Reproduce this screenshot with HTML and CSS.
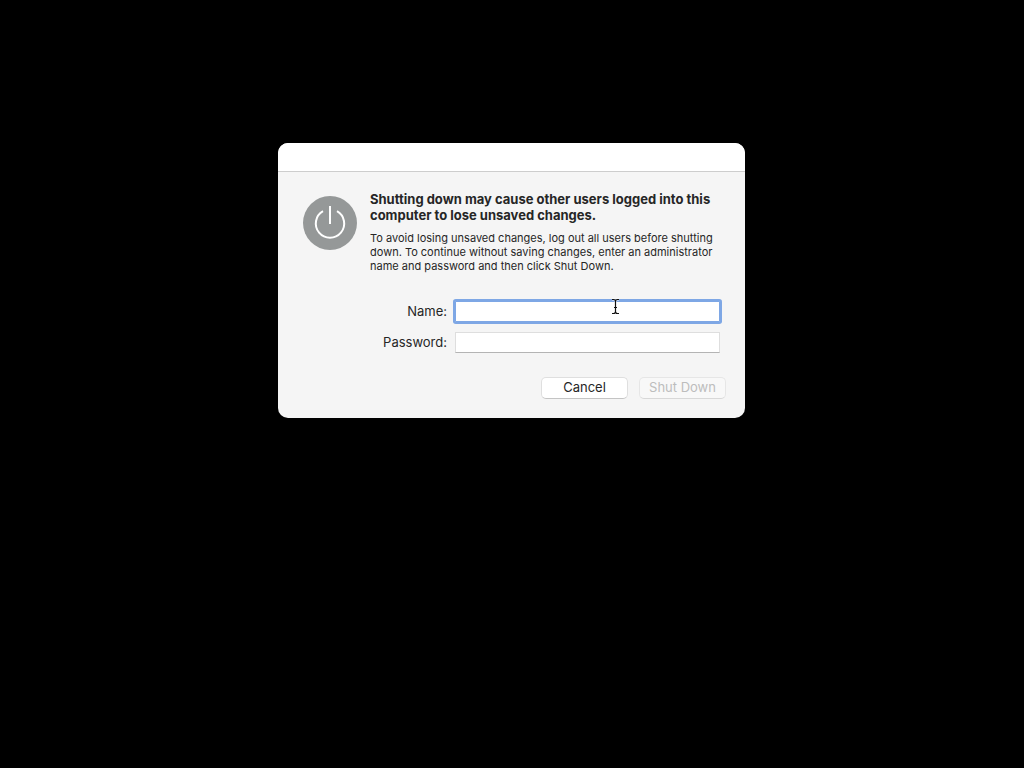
FILE: index.html
```html
<!DOCTYPE html>
<html lang="en">
<head>
<meta charset="utf-8">
<title>Shut Down</title>
<link rel="stylesheet" href="styles.css">
</head>
<body>
<main class="dialog" role="dialog" aria-labelledby="dialog-title" aria-describedby="dialog-text">
  <header class="titlebar"></header>
  <form class="content">
    <div class="message">
      <svg class="power-icon" viewBox="0 0 54 54" aria-hidden="true">
        <circle cx="27" cy="27" r="27" fill="#959898"/>
        <path d="M20 15.2A14.2 14.2 0 1 0 34 15.2M27 10V28" fill="none" stroke="#fff" stroke-width="2"/>
      </svg>
      <div class="copy">
        <h1 class="heading" id="dialog-title">Shutting down may cause other users logged into this computer to lose unsaved changes.</h1>
        <p class="text" id="dialog-text">To avoid losing unsaved changes, log out all users before shutting down. To continue without saving changes, enter an administrator name and password and then click Shut Down.</p>
      </div>
    </div>
    <div class="fields">
      <label class="label" for="name">Name:</label>
      <div class="field">
        <input class="input input-active" id="name" type="text" autocomplete="off">
        <svg class="cursor" viewBox="0 0 9 17" aria-hidden="true">
          <path d="M1 1.5H2.5Q4.5 1.5 4.5 3.5Q4.5 1.5 6.5 1.5H8M4.5 3V14M3 9.5H6M1 15.5H2.5Q4.5 15.5 4.5 13.5Q4.5 15.5 6.5 15.5H8" fill="none" stroke="#fff" stroke-width="2.4" stroke-opacity=".6"/>
          <path d="M1 1.5H2.5Q4.5 1.5 4.5 3.5Q4.5 1.5 6.5 1.5H8M4.5 3V14M3 9.5H6M1 15.5H2.5Q4.5 15.5 4.5 13.5Q4.5 15.5 6.5 15.5H8" fill="none" stroke="#111" stroke-width="1.2"/>
        </svg>
      </div>
      <label class="label" for="password">Password:</label>
      <input class="input" id="password" type="password">
    </div>
    <div class="actions">
      <button class="button" type="button">Cancel</button>
      <button class="button" type="submit" disabled>Shut Down</button>
    </div>
  </form>
</main>
</body>
</html>
```
FILE: styles.css
```css
* {
  box-sizing: border-box;
}

body {
  margin: 0;
  min-height: 100vh;
  padding: 143px 17px 16px 16px;
  background: #000;
  color: #262626;
  font-family: Inter, "Liberation Sans", sans-serif;
  font-size: 13px;
  line-height: 16px;
}

.dialog {
  max-width: 467px;
  margin: 0 auto;
  border-radius: 10px;
  background: #f5f5f5;
  overflow: hidden;
}

.titlebar {
  height: 29px;
  border-bottom: 1px solid #cdcdcd;
  background: #fff;
}

.content {
  padding: 19px 19px 19px 25px;
}

.message {
  display: flex;
  gap: 13px;
}

.power-icon {
  flex: none;
  width: 54px;
  height: 54px;
  margin-top: 5px;
}

.copy {
  flex: 1;
}

.heading {
  margin: 0 0 8px;
  font-size: 13px;
  font-weight: 700;
  line-height: 16px;
}

.text {
  margin: 0;
  font-size: 11px;
  line-height: 14px;
}

.fields {
  display: grid;
  grid-template-columns: 144px 1fr;
  gap: 10px 8px;
  align-items: center;
  margin: 28px 6px 0 0;
}

.label {
  padding-bottom: 2px;
  text-align: right;
}

.field {
  display: flex;
  position: relative;
}

.input {
  width: 100%;
  height: 21px;
  padding: 2px 4px;
  border: 1px solid #dedede;
  border-bottom-color: #b4b4b4;
  border-radius: 0;
  background: #fff;
  color: inherit;
  font: inherit;
  outline: none;
}

.input-active {
  border-color: #7ea7e5;
  border-radius: 1px;
  box-shadow: 0 0 0 2px #7ea7e5;
}

.cursor {
  position: absolute;
  top: -3px;
  left: 156px;
  width: 9px;
  height: 17px;
}

.actions {
  display: flex;
  justify-content: flex-end;
  gap: 11px;
  margin-top: 24px;
}

.button {
  width: 87px;
  height: 22px;
  padding: 0 0 2px;
  border: 1px solid #dfdfdf;
  border-bottom-color: #c4c4c4;
  border-radius: 5px;
  background: #fff;
  color: #262626;
  font: inherit;
}

.button:disabled {
  border-color: #e6e6e6;
  border-bottom-color: #d8d8d8;
  background: #f8f8f8;
  color: #bdbdbd;
}
```
